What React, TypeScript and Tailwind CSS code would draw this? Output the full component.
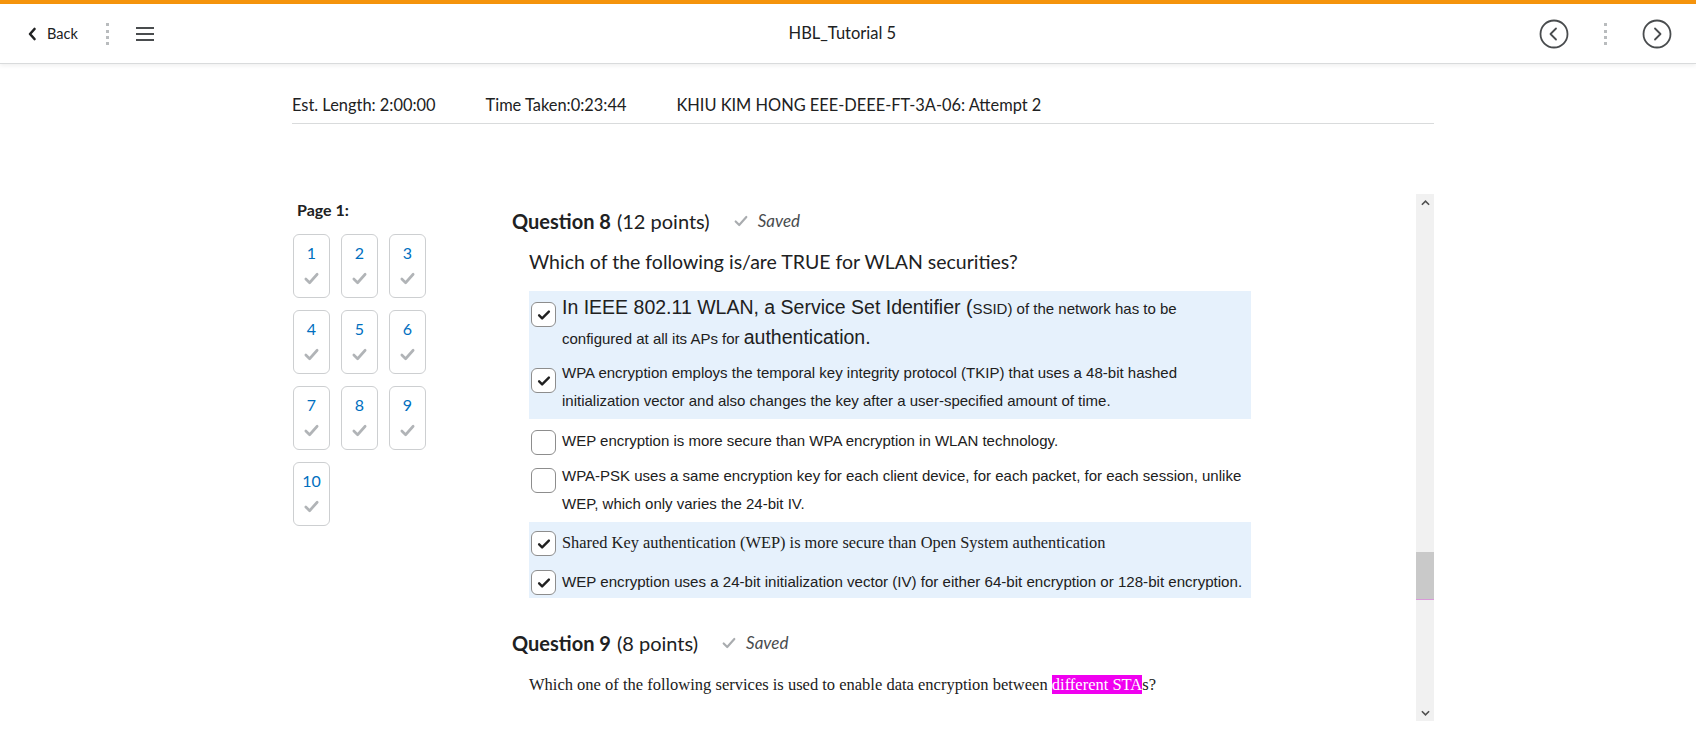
const lato = { fontFamily: "Lato, 'Open Sans', sans-serif" };
const arial = { fontFamily: "'Liberation Sans', Arial, sans-serif" };
const times = { fontFamily: "'Liberation Serif', 'Times New Roman', serif" };

function Check({ className, w = 2.2 }: { className?: string; w?: number }) {
  return (
    <svg viewBox="0 0 18 18" className={className} fill="none">
      <path d="M3 9.5l4 4 8-9" stroke="currentColor" strokeWidth={w} strokeLinecap="round" strokeLinejoin="round" />
    </svg>
  );
}

function CircleArrow({ dir }: { dir: "left" | "right" }) {
  return (
    <svg viewBox="0 0 30 30" className="w-[30px] h-[30px]" fill="none">
      <circle cx="15" cy="15" r="13.5" stroke="#494c4e" strokeWidth="1.8" />
      {dir === "left" ? (
        <path d="M17 9.5l-5.5 5.5 5.5 5.5" stroke="#494c4e" strokeWidth="1.8" strokeLinecap="round" strokeLinejoin="round" />
      ) : (
        <path d="M13 9.5l5.5 5.5-5.5 5.5" stroke="#494c4e" strokeWidth="1.8" strokeLinecap="round" strokeLinejoin="round" />
      )}
    </svg>
  );
}

function Dots() {
  return <div className="h-[22px] border-l-[3px] border-dotted border-[#b9bcbe]" />;
}

function Box({ checked, className }: { checked: boolean; className?: string }) {
  return (
    <div
      className={
        "shrink-0 w-[25px] h-[25px] rounded-[6px] border border-[#8d8d8d] bg-white flex items-center justify-center " +
        (className ?? "")
      }
    >
      {checked && (
        <svg viewBox="0 0 24 24" className="w-[18px] h-[18px]" fill="none">
          <path d="M5.5 12.5l4 4L18.5 7.5" stroke="#202020" strokeWidth="3.2" strokeLinecap="round" strokeLinejoin="round" />
        </svg>
      )}
    </div>
  );
}

function Tile({ n }: { n: number }) {
  return (
    <div className="w-[37px] h-[64px] rounded-[6px] border border-[#cdcfd1] flex flex-col items-center pt-[7px]">
      <span className="text-[16px] leading-[22px] text-[#006fbf]">{n}</span>
      <Check w={2.8} className="w-[17px] h-[17px] mt-[6px] text-[#b1b4b7]" />
    </div>
  );
}

function QHead({ num, pts }: { num: number; pts: string }) {
  return (
    <div className="flex items-center text-[20px] leading-[28px] text-[#202122]" style={lato}>
      <span className="font-bold">Question {num}</span>
      <span className="ml-[6px]">({pts})</span>
      <Check w={2.4} className="w-[16px] h-[16px] ml-[23px] text-[#a9acaf]" />
      <span className="ml-[9px] text-[17px] italic text-[#494c4e]">Saved</span>
    </div>
  );
}

export default function App() {
  return (
    <div className="w-[1696px] h-[740px] bg-white overflow-hidden text-[#202122]" style={lato}>
      <div className="h-[4px] bg-[#f5940c]" />
      <header className="h-[60px] border-b border-[#d9dbdc] shadow-[0_2px_4px_rgba(0,0,0,0.06)] flex items-center pl-[27px] pr-[24px]">
        <div className="flex items-center gap-[10px] text-[14.5px] text-[#202122]">
          <svg viewBox="0 0 10 14" className="w-[10px] h-[14px]" fill="none">
            <path d="M7.5 2L3 7l4.5 5" stroke="#202122" strokeWidth="2.6" strokeLinecap="round" strokeLinejoin="round" />
          </svg>
          <span>Back</span>
        </div>
        <div className="ml-[28px]">
          <Dots />
        </div>
        <div className="ml-[27px] flex flex-col gap-[4px]">
          <div className="w-[18px] h-[2px] bg-[#494c4e]" />
          <div className="w-[18px] h-[2px] bg-[#494c4e]" />
          <div className="w-[18px] h-[2px] bg-[#494c4e]" />
        </div>
        <div className="flex-1 text-center text-[16.5px] text-[#202122] pr-[8px]">HBL_Tutorial 5</div>
        <div className="flex items-center">
          <CircleArrow dir="left" />
          <div className="mx-[35px]">
            <Dots />
          </div>
          <CircleArrow dir="right" />
        </div>
      </header>

      <div className="ml-[292px] w-[1142px]">
        <div className="pt-[29px] pb-[6px] border-b border-[#d9dbdc] flex gap-[50px] text-[16.4px] leading-[24px] text-[#202122]">
          <span>Est. Length: 2:00:00</span>
          <span>Time Taken:0:23:44</span>
          <span>KHIU KIM HONG EEE-DEEE-FT-3A-06: Attempt 2</span>
        </div>

        <div className="flex">
          <aside className="w-[208px] pt-[74px]">
            <div className="pl-[5px] text-[16px] leading-[24px] font-bold text-[#202122]">Page 1:</div>
            <div className="mt-[12px] grid grid-cols-[37px_37px_37px] gap-x-[11px] gap-y-[12px] pl-[1px]">
              {[1, 2, 3, 4, 5, 6, 7, 8, 9, 10].map((n) => (
                <Tile key={n} n={n} />
              ))}
            </div>
          </aside>

          <div className="mt-[70px] h-[527px] flex flex-1">
            <div className="flex-1 overflow-hidden pl-[12px] pt-[13px]">
              <QHead num={8} pts="12 points" />
              <div className="ml-[17px] mt-[13px] text-[19.5px] leading-[28px] text-[#202122]">
                Which of the following is/are TRUE for WLAN securities?
              </div>

              <div className="ml-[17px] mt-[15px] w-[722px] text-[#202020]" style={arial}>
                <div className="bg-[#e6f1fc]">
                  <div className="flex pl-[2px] pt-[3px] pb-[1px]">
                    <Box checked className="mt-[8px]" />
                    <div className="ml-[6px] text-[15px] leading-[30px] whitespace-nowrap">
                      <span className="text-[19.5px] leading-[24px]">In IEEE 802.11 WLAN, a Service Set Identifier (</span>
                      SSID) of the network has to be
                      <br />
                      configured at all its APs for{" "}
                      <span className="text-[19.5px] leading-[24px]">authentication.</span>
                    </div>
                  </div>
                  <div className="flex pl-[2px] py-[4px]">
                    <Box checked className="mt-[9px]" />
                    <div className="ml-[6px] text-[15px] leading-[28px] whitespace-nowrap">
                      WPA encryption employs the temporal key integrity protocol (TKIP) that uses a 48-bit hashed
                      <br />
                      initialization vector and also changes the key after a user-specified amount of time.
                    </div>
                  </div>
                </div>
                <div className="flex pl-[2px] pt-[8px]">
                  <Box checked={false} className="mt-[3px]" />
                  <div className="ml-[6px] text-[15px] leading-[28px]">
                    WEP encryption is more secure than WPA encryption in WLAN technology.
                  </div>
                </div>
                <div className="flex pl-[2px] pt-[7px] pb-[4px]">
                  <Box checked={false} className="mt-[6px]" />
                  <div className="ml-[6px] text-[15px] leading-[28px] whitespace-nowrap">
                    WPA-PSK uses a same encryption key for each client device, for each packet, for each session, unlike
                    <br />
                    WEP, which only varies the 24-bit IV.
                  </div>
                </div>
                <div className="bg-[#e6f1fc]">
                  <div className="flex pl-[2px] pt-[7px] pb-[4px]">
                    <Box checked className="mt-[2px]" />
                    <div className="ml-[6px] text-[16.4px] leading-[28px]" style={times}>
                      Shared Key authentication (WEP) is more secure than Open System authentication
                    </div>
                  </div>
                  <div className="flex pl-[2px] pt-[7px] pb-[2px]">
                    <Box checked className="mt-[2px]" />
                    <div className="ml-[6px] text-[15.1px] leading-[28px] whitespace-nowrap">
                      WEP encryption uses a 24-bit initialization vector (IV) for either 64-bit encryption or 128-bit
                      encryption.
                    </div>
                  </div>
                </div>
              </div>

              <div className="mt-[31px]">
                <QHead num={9} pts="8 points" />
              </div>
              <div className="ml-[17px] mt-[16px] text-[16.5px] leading-[24px] text-[#202020]" style={times}>
                Which one of the following services is used to enable data encryption between{" "}
                <span className="bg-[#f000f0] text-white">different STA</span>s?
              </div>
            </div>

            <div className="w-[18px] bg-[#f1f1f1] flex flex-col">
              <div className="h-[17px] flex items-center justify-center">
                <svg viewBox="0 0 10 6" className="w-[9px] h-[6px]">
                  <path d="M1 5l4-4 4 4" stroke="#505050" strokeWidth="1.8" fill="none" />
                </svg>
              </div>
              <div className="flex-1">
                <div className="mt-[341px] h-[48px] bg-[#c9c9c9] border-b border-[#d99ad9]" />
              </div>
              <div className="h-[17px] flex items-center justify-center">
                <svg viewBox="0 0 10 6" className="w-[9px] h-[6px]">
                  <path d="M1 1l4 4 4-4" stroke="#505050" strokeWidth="1.8" fill="none" />
                </svg>
              </div>
            </div>
          </div>
        </div>
      </div>
    </div>
  );
}
